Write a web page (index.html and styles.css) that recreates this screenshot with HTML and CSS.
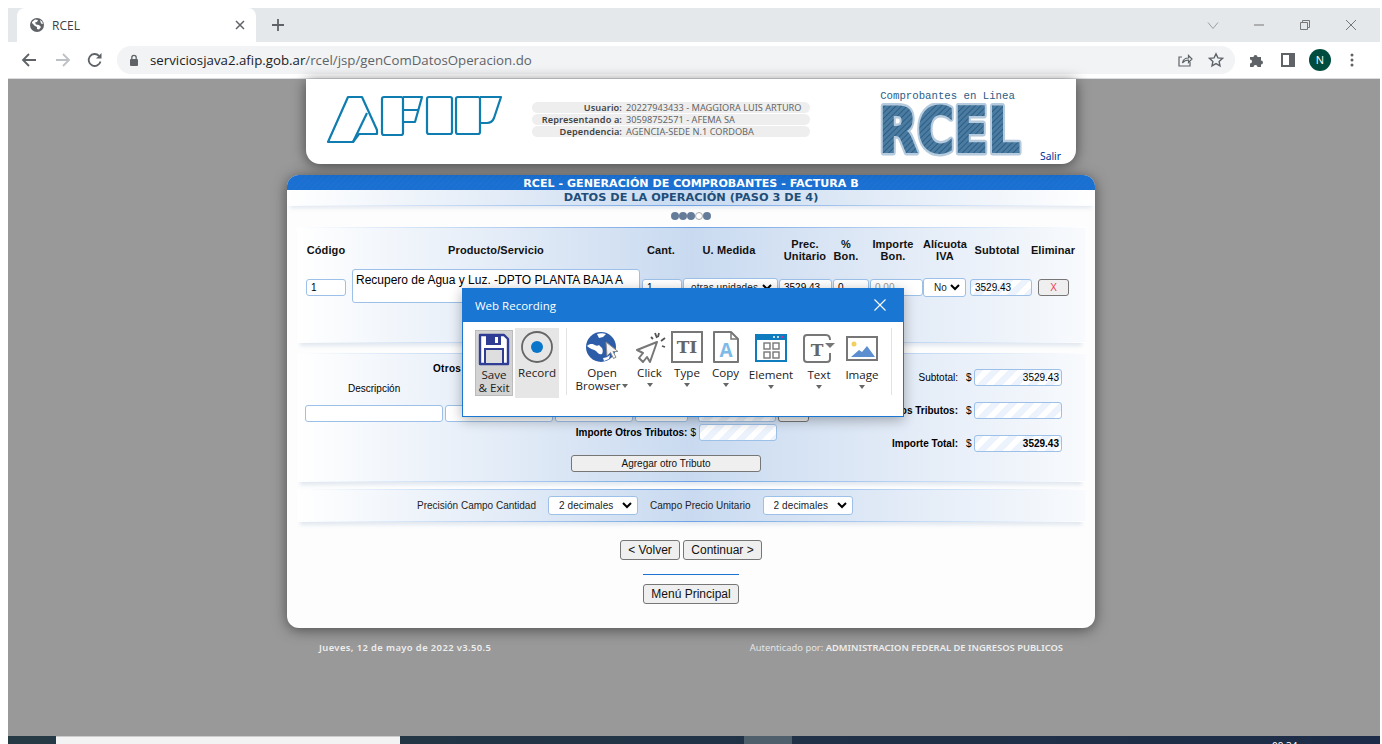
FILE: index.html
```html
<!DOCTYPE html>
<html lang="es">
<head>
  <meta charset="UTF-8">
  <title>RCEL</title>
  <link rel="stylesheet" href="styles.css">
</head>
<body>

<div class="window">
  <div class="tabstrip">
    <div class="tab">
      <svg class="tab-globe" width="16" height="16" viewBox="0 0 16 16"><circle cx="8" cy="8" r="7" fill="#5f6368"/><path d="M3 5l3-2.500 3 .5-1 2-2 .5 1 2 3 .5 2 2-2 2.500-2-.5v-2l-2-1-3-3z" fill="#fff"/><path d="M11 3l2 1.500 1 2.500-2-.5z" fill="#fff"/></svg>
      <span class="tab-title">RCEL</span>
      <svg width="10" height="10" viewBox="0 0 10 10"><path d="M1 1l8 8M9 1l-8 8" stroke="#5f6368" stroke-width="1.500"/></svg>
    </div>
    <svg class="tab-new" width="14" height="14" viewBox="0 0 14 14"><path d="M7 1v12M1 7h12" stroke="#5f6368" stroke-width="1.800"/></svg>
    <div class="win-buttons">
      <svg width="12" height="12" viewBox="0 0 12 12"><path d="M1 3.500l5 6 5-6" fill="none" stroke="#9aa0a6"/></svg>
      <svg width="12" height="12" viewBox="0 0 12 12"><path d="M1 6h10" stroke="#777"/></svg>
      <svg width="12" height="12" viewBox="0 0 12 12"><path d="M1.500 3.500h7v7h-7zM3.500 3.500v-2h7v7h-2" fill="none" stroke="#777"/></svg>
      <svg width="12" height="12" viewBox="0 0 12 12"><path d="M1 1l10 10M11 1l-10 10" stroke="#777"/></svg>
    </div>
  </div>

  <div class="toolbar">
    <svg class="nav-back" width="16" height="16" viewBox="0 0 16 16"><path d="M15 8H2M8 2L2 8l6 6" fill="none" stroke="#5f6368" stroke-width="1.800"/></svg>
    <svg class="nav-forward" width="16" height="16" viewBox="0 0 16 16"><path d="M1 8h13M8 2l6 6-6 6" fill="none" stroke="#bdc1c6" stroke-width="1.800"/></svg>
    <svg class="nav-reload" width="16" height="16" viewBox="0 0 16 16"><path d="M13.500 9.500A6 6 0 1 1 12 3.800" fill="none" stroke="#5f6368" stroke-width="1.800"/><path d="M14.500 1v5.500H9z" fill="#5f6368"/></svg>
    <div class="urlbar">
      <svg class="lock" width="10" height="12" viewBox="0 0 10 12"><rect x="1" y="5" width="8" height="7" rx="1" fill="#5f6368"/><path d="M2.800 5V3.500a2.200 2.200 0 0 1 4.400 0V5" fill="none" stroke="#5f6368" stroke-width="1.300"/></svg>
      <span class="url"><span class="url-host">serviciosjava2.afip.gob.ar</span>/rcel/jsp/genComDatosOperacion.do</span>
      <svg class="url-share" width="16" height="16" viewBox="0 0 16 16"><path d="M13 10v4H2V5h3" fill="none" stroke="#5f6368" stroke-width="1.200"/><path d="M5.500 11c.5-3.500 3-5 6-5V3.500L15 7l-3.500 3.500V8c-2.500 0-4.500 1-6 3z" fill="none" stroke="#5f6368" stroke-width="1.200"/></svg>
      <svg class="url-star" width="16" height="16" viewBox="0 0 16 16"><path d="M8 1.800l1.900 4.100 4.500.5-3.300 3 .9 4.400L8 11.600l-4 2.200.9-4.400-3.300-3 4.500-.5z" fill="none" stroke="#5f6368" stroke-width="1.400"/></svg>
    </div>
    <svg class="ext" width="16" height="16" viewBox="0 0 16 16"><path d="M1 5h3.500a2 2 0 1 1 4 0H12v3.500a2 2 0 1 1 0 4V15H8.500a2 2 0 1 0-4 0H1v-3.500a2 2 0 1 0 0-4z" fill="#5f6368"/></svg>
    <svg class="side" width="14" height="14" viewBox="0 0 14 14"><rect x="1" y="1" width="12" height="12" fill="none" stroke="#5f6368" stroke-width="2"/><rect x="8" y="1" width="5" height="12" fill="#5f6368"/></svg>
    <div class="avatar">N</div>
    <svg class="dots" width="4" height="14" viewBox="0 0 4 14"><circle cx="2" cy="2" r="1.500" fill="#5f6368"/><circle cx="2" cy="7" r="1.500" fill="#5f6368"/><circle cx="2" cy="12" r="1.500" fill="#5f6368"/></svg>
  </div>

  <div class="page">
    <div class="content">

      <div class="header-card">
        <svg class="afip-logo" width="190" height="65" viewBox="0 0 190 65">
          <g fill="none" stroke="#0f7db0" stroke-width="2.200" stroke-linejoin="round">
            <path d="M28 12H42L57 45V49H39L33 57H8Z"/>
            <path d="M33 57L47 28"/>
            <rect x="62" y="12" width="21" height="38" rx="2"/>
            <path d="M83 12H102L95 37H84M84 25H98"/>
            <rect x="107" y="12" width="25" height="37" rx="2"/>
            <rect x="136" y="12" width="24" height="37" rx="2"/>
            <path d="M160 12H181L174 33Q172 38 167 38H160"/>
          </g>
        </svg>
        <div class="user-info">
          <div class="user-row"><b>Usuario:</b><span>20227943433 - MAGGIORA LUIS ARTURO</span></div>
          <div class="user-row"><b>Representando a:</b><span>30598752571 - AFEMA SA</span></div>
          <div class="user-row"><b>Dependencia:</b><span>AGENCIA-SEDE N.1 CORDOBA</span></div>
        </div>
        <div class="rcel-logo">
          <div class="rcel-caption">Comprobantes en Linea</div>
          <svg width="156" height="54" viewBox="0 0 156 54">
            <defs>
              <pattern id="hatch" width="4" height="4" patternUnits="userSpaceOnUse" patternTransform="rotate(45)">
                <rect width="4" height="4" fill="#4a7ca3"/>
                <rect width="1" height="4" fill="#2f5c7e"/>
              </pattern>
            </defs>
            <text x="9" y="49" class="rcel-text rcel-halo" textLength="141" lengthAdjust="spacingAndGlyphs">RCEL</text>
            <text x="9" y="49" class="rcel-text" textLength="141" lengthAdjust="spacingAndGlyphs">RCEL</text>
          </svg>
        </div>
        <a class="salir">Salir</a>
      </div>

      <div class="main-card">
        <div class="title-bar">RCEL - GENERACIÓN DE COMPROBANTES - FACTURA B</div>
        <div class="subtitle-bar">DATOS DE LA OPERACIÓN (PASO 3 DE 4)</div>
        <div class="steps">
          <i class="step"></i><i class="step"></i><i class="step"></i><i class="step step-open"></i><i class="step"></i>
        </div>

        <div class="section section-items">
          <div class="item-head">
            <div>Código</div>
            <div>Producto/Servicio</div>
            <div>Cant.</div>
            <div>U. Medida</div>
            <div>Prec. Unitario</div>
            <div>% Bon.</div>
            <div>Importe Bon.</div>
            <div>Alícuota IVA</div>
            <div>Subtotal</div>
            <div>Eliminar</div>
          </div>
          <div class="item-row">
            <input class="field w-code" value="1">
            <textarea class="field w-desc">Recupero de Agua y Luz. -DPTO PLANTA BAJA A</textarea>
            <input class="field w-qty" value="1">
            <select class="pick w-unit"><option>otras unidades</option></select>
            <input class="field w-price" value="3529.43">
            <input class="field w-bon" value="0">
            <input class="field w-imp" value="0.00">
            <select class="pick w-iva"><option>No Gravado</option></select>
            <input class="field hatched w-sub" value="3529.43">
            <button class="btn btn-del">X</button>
          </div>
        </div>

        <div class="section section-taxes">
          <div class="taxes-left">
            <div class="taxes-title">Otros Tributos</div>
            <div class="taxes-head"><span>Descripción</span></div>
            <div class="taxes-row">
              <input class="field t-desc">
              <input class="field t-det">
              <input class="field t-base">
              <input class="field t-ali">
              <input class="field hatched t-imp">
              <button class="btn t-del"></button>
            </div>
            <div class="taxes-total">
              <b>Importe Otros Tributos:</b> <span>$</span>
              <input class="field hatched t-imp">
            </div>
            <button class="btn btn-add">Agregar otro Tributo</button>
          </div>
          <div class="totals">
            <span class="total-label">Subtotal:</span><span>$</span>
            <input class="field hatched amount" value="3529.43">
            <b class="total-label">Importe Otros Tributos:</b><span>$</span>
            <input class="field hatched amount">
            <b class="total-label">Importe Total:</b><span>$</span>
            <input class="field hatched amount amount-strong" value="3529.43">
          </div>
        </div>

        <div class="section section-precision">
          <span>Precisión Campo Cantidad</span>
          <select class="pick w-prec"><option>2 decimales</option></select>
          <span>Campo Precio Unitario</span>
          <select class="pick w-prec"><option>2 decimales</option></select>
        </div>

        <div class="nav-buttons">
          <button class="btn btn-nav">&lt; Volver</button>
          <button class="btn btn-nav btn-next">Continuar &gt;</button>
        </div>
        <div class="nav-line"></div>
        <button class="btn btn-nav btn-menu">Menú Principal</button>
      </div>

      <div class="footer">
        <span class="footer-date">Jueves, 12 de mayo de 2022 v3.50.5</span>
        <span class="footer-auth">Autenticado por: <b>ADMINISTRACION FEDERAL DE INGRESOS PUBLICOS</b></span>
      </div>
    </div>
  </div>

  <div class="taskbar">
    <div class="task-white"></div>
    <div class="task-active"></div>
    <div class="task-time">09:34</div>
  </div>
</div>

<div class="recorder">
  <div class="recorder-head">
    <span>Web Recording</span>
    <svg width="12" height="12" viewBox="0 0 12 12"><path d="M.5.500l11 11M11.500.500l-11 11" stroke="#fff" stroke-width="1.100"/></svg>
  </div>
  <div class="recorder-tools">
    <div class="tool-save">
      <svg width="32" height="33" viewBox="0 0 32 33">
        <path d="M2 2h24l4 4v25H2z" fill="#fff" stroke="#2f3d94" stroke-width="2.400" stroke-linejoin="round"/>
        <rect x="8" y="2" width="15" height="10" fill="#2f3d94"/>
        <rect x="17" y="4" width="3" height="6" fill="#fff"/>
        <rect x="7" y="16" width="18" height="15" fill="#dedede" stroke="#2f3d94" stroke-width="2"/>
      </svg>
      <div class="tool-label">Save<br>&amp; Exit</div>
    </div>
    <div class="tool-record">
      <svg width="32" height="32" viewBox="0 0 32 32"><circle cx="16" cy="16" r="15" fill="none" stroke="#666" stroke-width="1.800"/><circle cx="16" cy="16" r="6" fill="#0a76c9"/></svg>
      <div class="tool-label">Record</div>
    </div>
    <div class="tool-sep"></div>
    <div class="tool w-open">
      <svg width="34" height="32" viewBox="0 0 34 32">
        <circle cx="16" cy="16" r="15" fill="#2d5da8"/>
        <path d="M2 15c3-3 6-2 8-1 1 1 3 1 4 0l3 3c1 2 1 4 0 6-3 1-4-1-6-3-3-2-6-2-9-5zM12 3c3-1 6-1 9 0l-3 3-4 1zM18 27c2 0 5-1 7-3l-1 4-5 2z" fill="#fff"/>
        <path d="M21 11l1 14 3.500-3.500 3 6 2.500-1.200-3-5.800h5z" fill="#f4f4f4" stroke="#8a8a8a"/>
      </svg>
      <div class="tool-label">Open<br>Browser<i class="caret caret-side"></i></div>
    </div>
    <div class="tool w-click">
      <svg width="32" height="32" viewBox="0 0 32 32">
        <path d="M23 11L3 19l6 3-4 5 4 4 4-5 3 5z" fill="#fff" stroke="#777" stroke-width="2" stroke-linejoin="round"/>
        <path d="M23 7l-2-5M27 10l4-3M28 15l3 1M19 8l-2-2M25 2l-1 4" stroke="#555" stroke-width="1.800"/>
      </svg>
      <div class="tool-label">Click</div>
      <i class="caret"></i>
    </div>
    <div class="tool w-type">
      <svg width="32" height="32" viewBox="0 0 32 32">
        <rect x="1" y="1" width="30" height="30" fill="#fff" stroke="#777" stroke-width="2"/>
        <text x="16" y="22" class="icon-letters">TI</text>
      </svg>
      <div class="tool-label">Type</div>
      <i class="caret"></i>
    </div>
    <div class="tool w-copy">
      <svg width="26" height="32" viewBox="0 0 26 32">
        <path d="M1 1h17l7 7v23H1z" fill="#fff" stroke="#777" stroke-width="2" stroke-linejoin="round"/>
        <path d="M18 1v7h7" fill="none" stroke="#777" stroke-width="1.500"/>
        <text x="13" y="26" class="icon-letter-a">A</text>
      </svg>
      <div class="tool-label">Copy</div>
      <i class="caret"></i>
    </div>
    <div class="tool tool-low w-element">
      <svg width="32" height="28" viewBox="0 0 32 28">
        <rect x="1" y="1" width="30" height="26" fill="#fff" stroke="#0f7cc0" stroke-width="2"/>
        <rect x="0" y="0" width="32" height="6" fill="#0f7cc0"/>
        <circle cx="19" cy="3" r="1" fill="#fff"/><circle cx="23" cy="3" r="1" fill="#fff"/><circle cx="27" cy="3" r="1" fill="#f28"/>
        <g fill="none" stroke="#777" stroke-width="1.400"><rect x="9" y="9" width="6" height="6"/><rect x="18" y="9" width="6" height="6"/><rect x="9" y="18" width="6" height="6"/><rect x="18" y="18" width="6" height="6"/></g>
      </svg>
      <div class="tool-label">Element</div>
      <i class="caret"></i>
    </div>
    <div class="tool tool-low w-text">
      <svg width="32" height="29" viewBox="0 0 32 29">
        <path d="M23 1H4Q1 1 1 4v21q0 3 3 3h20q3 0 3-3v-6" fill="none" stroke="#777" stroke-width="2"/>
        <path d="M23 1q4 0 4 5" fill="none" stroke="#777" stroke-width="2"/>
        <path d="M22 9h10l-5 5z" fill="#777"/>
        <text x="14" y="22" class="icon-letters">T</text>
      </svg>
      <div class="tool-label">Text</div>
      <i class="caret"></i>
    </div>
    <div class="tool tool-low w-image">
      <svg width="32" height="26" viewBox="0 0 32 26">
        <rect x="1" y="1" width="30" height="23" fill="#fff" stroke="#777" stroke-width="2"/>
        <circle cx="8" cy="8" r="2.500" fill="#f0d060"/>
        <path d="M5 21l8-7 3 2 5-6 8 11z" fill="#5b8fd0"/>
      </svg>
      <div class="tool-label">Image</div>
      <i class="caret"></i>
    </div>
    <div class="tool-sep tool-sep-end"></div>
  </div>
</div>

</body>
</html>
```

FILE: styles.css
```css
* {
  box-sizing: border-box;
}
html, body {
  margin: 0;
  height: 744px;
  overflow: hidden;
  background: #fff;
}
body {
  font-family: "Liberation Sans", Arial, sans-serif;
  font-size: 10px;
  color: #000;
}
svg {
  display: block;
  flex: none;
}

/* browser */
.window {
  margin: 8px 2px 0 8px;
  height: 736px;
  display: flex;
  flex-direction: column;
}
.tabstrip {
  height: 34px;
  background: #e5e8eb;
  display: flex;
  align-items: center;
  padding-left: 9px;
}
.tab {
  width: 239px;
  height: 34px;
  background: #fff;
  border-radius: 8px 8px 0 0;
  display: flex;
  align-items: center;
  padding: 0 11px 0 12px;
}
.tab-title {
  font-family: "Open Sans", sans-serif;
  font-size: 12px;
  color: #3c4043;
  margin-left: 7px;
  flex: 1;
}
.tab-new {
  margin-left: 15px;
}
.win-buttons {
  margin-left: auto;
  display: flex;
  gap: 34px;
  padding-right: 23px;
}
.toolbar {
  height: 37px;
  padding-bottom: 1px;
  border-bottom: 1px solid #dadce0;
  display: flex;
  align-items: center;
  background: #fff;
}
.nav-back {
  margin-left: 13px;
}
.nav-forward {
  margin-left: 18px;
}
.nav-reload {
  margin-left: 16px;
}
.urlbar {
  margin-left: 14px;
  width: 1118px;
  height: 28px;
  border-radius: 14px;
  background: #f1f3f4;
  display: flex;
  align-items: center;
  padding-left: 12px;
}
.url {
  font-family: "Open Sans", sans-serif;
  font-size: 13.270px;
  color: #5f6368;
  margin-left: 11px;
  flex: 1;
  white-space: nowrap;
}
.url-host {
  color: #202124;
}
.url-share {
  margin-right: 15px;
}
.url-star {
  margin-right: 11px;
}
.ext {
  margin-left: 14px;
}
.side {
  margin-left: 16px;
}
.avatar {
  margin-left: 14px;
  width: 22px;
  height: 22px;
  border-radius: 50%;
  background: #004d40;
  color: #fff;
  font-family: "Open Sans", sans-serif;
  font-size: 11px;
  display: flex;
  align-items: center;
  justify-content: center;
}
.dots {
  margin-left: 19px;
}

/* afip page */
.page {
  flex: 1;
  background: #999;
  min-height: 0;
}
.content {
  width: 808px;
  margin-left: 279px;
}
.header-card {
  width: 770px;
  height: 85px;
  margin: 0 19px;
  background: #fff;
  border-radius: 0 0 14px 14px;
  box-shadow: 0 2px 14px rgba(0, 0, 0, .55);
  display: flex;
  position: relative;
}
.afip-logo {
  margin: 6px 0 0 14px;
}
.user-info {
  margin: 23px 0 0 22px;
  width: 278px;
  display: flex;
  flex-direction: column;
  gap: 1px;
}
.user-row {
  height: 11px;
  background: #eee;
  border-radius: 6px;
  display: grid;
  grid-template-columns: 90px 1fr;
  column-gap: 4px;
  font-family: "Noto Sans", sans-serif;
  font-size: 9.200px;
  line-height: 11px;
  color: #666;
  white-space: nowrap;
}
.user-row b {
  text-align: right;
  color: #444;
  font-weight: 600;
  letter-spacing: .1px;
}
.rcel-logo {
  margin: 11px 0 0 60px;
  width: 150px;
}
.rcel-caption {
  font-family: "Liberation Mono", monospace;
  font-size: 10.700px;
  line-height: 13px;
  color: #2d5e86;
  text-align: center;
  padding-left: 5px;
}
.rcel-text {
  font-family: "DejaVu Sans", sans-serif;
  font-weight: bold;
  font-size: 62px;
  fill: url(#hatch);
  stroke: url(#hatch);
  stroke-width: 2px;
}
.rcel-halo {
  fill: #b5cbdd;
  stroke: #b5cbdd;
  stroke-width: 7px;
  stroke-linejoin: round;
}
.salir {
  position: absolute;
  left: 734px;
  top: 70px;
  font-family: "Noto Sans", sans-serif;
  font-size: 10.300px;
  color: #003399;
}

.main-card {
  margin-top: 11px;
  height: 453px;
  background: #fdfdfd;
  border-radius: 12px;
  box-shadow: 0 2px 14px rgba(0, 0, 0, .5);
  display: flex;
  flex-direction: column;
  align-items: center;
  overflow: hidden;
}
.title-bar {
  width: 100%;
  height: 15px;
  background: repeating-linear-gradient(135deg, #1a6fd0 0 2px, #1c72d3 2px 4px);
  color: #fff;
  font-family: "DejaVu Sans", sans-serif;
  font-weight: bold;
  font-size: 11.100px;
  line-height: 17px;
  text-align: center;
}
.subtitle-bar {
  width: 100%;
  height: 16px;
  flex: none;
  background: linear-gradient(90deg, #fff, #c9daf0 50%, #fff);
  border-bottom: 1px solid #8fb8e8;
  border-image: linear-gradient(90deg, #fff, #6ea3e4 50%, #fff) 1;
  box-shadow: 0 5px 4px -3px rgba(120, 150, 190, .2);
  color: #1f4e79;
  font-family: "DejaVu Sans", sans-serif;
  font-weight: bold;
  font-size: 11.300px;
  line-height: 15px;
  text-align: center;
}
.steps {
  height: 21px;
  padding-bottom: 2px;
  display: flex;
  align-items: center;
  gap: 0;
}
.step {
  width: 8px;
  height: 8px;
  border-radius: 50%;
  background: #667d99;
}
.step-open {
  background: #fff;
  border: 1px solid #aaa;
}
.section {
  width: 788px;
  flex: none;
  background: linear-gradient(90deg, #fff, #c9daf0 50%, #f8fafd);
  border-top: 1px solid #8fb8e8;
  border-bottom: 1px solid #8fb8e8;
  border-image: linear-gradient(90deg, #fff, #6ea3e4 50%, #fff) 1;
  box-shadow: 0 6px 4px -3px rgba(120, 150, 190, .2);
}
.section-items {
  height: 116px;
  padding: 10px 0 0 9px;
}
.item-head {
  display: grid;
  grid-template-columns: 40px 300px 30px 106px 46px 36px 58px 46px 58px 54px;
  height: 24px;
  align-items: center;
  text-align: center;
  font-size: 11px;
  font-weight: bold;
  line-height: 12px;
  letter-spacing: .1px;
  color: #111;
  white-space: nowrap;
}
.item-head div:nth-child(5),
.item-head div:nth-child(6),
.item-head div:nth-child(7),
.item-head div:nth-child(8) {
  white-space: normal;
}
.item-row {
  margin-top: 7px;
  display: flex;
  align-items: center;
  height: 34px;
}
.item-row > * {
  margin-top: 2px;
}
.field {
  height: 17px;
  border: 1px solid #9cc0e7;
  border-radius: 3px;
  background: #fff;
  padding: 1px 4px;
  font-family: "Liberation Sans", Arial, sans-serif;
  font-size: 10px;
  color: #000;
  outline: none;
}
.pick {
  appearance: none;
  height: 19px;
  border: 1px solid #9cc0e7;
  border-radius: 3px;
  background: #fff url("data:image/svg+xml,%3Csvg xmlns='http://www.w3.org/2000/svg' width='10' height='7'%3E%3Cpath d='M1 1l4 4 4-4' fill='none' stroke='%23000' stroke-width='2'/%3E%3C/svg%3E") no-repeat right 5px center;
  font-family: "Liberation Sans", Arial, sans-serif;
  font-size: 10px;
  letter-spacing: .1px;
  color: #222;
  padding: 0 18px 0 10px;
}
.hatched {
  background: repeating-linear-gradient(135deg, #edf3fc 0 6px, #fff 6px 12px);
}
.w-code {
  width: 40px;
}
.item-row .w-desc {
  width: 288px;
  height: 34px;
  margin: 0 0 0 6px;
  padding: 3px 3px;
  font-size: 12px;
  resize: none;
  overflow: hidden;
}
.w-qty {
  width: 40px;
  margin-left: 2px;
}
.w-unit {
  width: 95px;
  margin-left: 1px;
  padding-left: 7px;
}
.w-price {
  width: 53px;
  margin-left: 1px;
}
.w-bon {
  width: 36px;
  margin-left: 1px;
}
.w-imp {
  width: 53px;
  margin-left: 1px;
  color: #999;
}
.w-iva {
  width: 43px;
}
.w-sub {
  width: 62px;
  margin-left: 4px;
}
.btn {
  border: 1px solid #767676;
  border-radius: 3px;
  background: #efefef;
  font-family: "Liberation Sans", Arial, sans-serif;
  color: #111;
  padding: 0;
}
.btn-del {
  width: 31px;
  height: 17px;
  margin-left: 6px;
  color: #f0405a;
  font-size: 10px;
}

.section-taxes {
  margin-top: 10px;
  height: 129px;
  display: flex;
  padding-left: 8px;
}
.taxes-left {
  width: 505px;
  flex: none;
}
.taxes-title {
  margin-top: 8px;
  padding-left: 128px;
  font-size: 10px;
  font-weight: bold;
  line-height: 13px;
  letter-spacing: .3px;
}
.taxes-head {
  margin-top: 7px;
  height: 13px;
  line-height: 13px;
  padding-left: 43px;
}
.taxes-row {
  margin-top: 10px;
  display: flex;
}
.t-desc {
  width: 138px;
}
.t-det {
  width: 108px;
  margin-left: 2px;
}
.t-base {
  width: 78px;
  margin-left: 2px;
}
.t-ali {
  width: 53px;
  margin-left: 2px;
}
.t-imp {
  width: 78px;
  margin-left: 10px;
}
.t-del {
  width: 31px;
  height: 17px;
  margin-left: 2px;
}
.taxes-total {
  margin-top: 2px;
  display: flex;
  justify-content: flex-end;
  align-items: center;
  gap: 3px;
  padding-right: 33px;
}
.taxes-total .t-imp {
  margin-left: 0;
}
.btn-add {
  display: block;
  width: 190px;
  height: 17px;
  margin: 14px 0 0 266px;
  font-size: 10px;
}
.totals {
  margin: 15px 0 0 0;
  width: 252px;
  display: grid;
  grid-template-columns: 1fr 8px 88px;
  row-gap: 16px;
  column-gap: 0;
  align-items: center;
  height: 83px;
}
.total-label {
  text-align: right;
  padding-right: 8px;
  white-space: nowrap;
}
.amount {
  width: 88px;
  text-align: right;
  padding-right: 2px;
}
.amount-strong {
  font-weight: bold;
}
.section-precision {
  margin-top: 7px;
  height: 33px;
  display: flex;
  align-items: center;
  padding-left: 120px;
  color: #222;
}
.w-prec {
  width: 90px;
  margin: 0 12px;
}
.nav-buttons {
  margin-top: 18px;
  display: flex;
  gap: 3px;
}
.btn-nav {
  height: 20px;
  font-size: 12px;
  width: 60px;
}
.btn-next {
  width: 79px;
}
.nav-line {
  margin-top: 14px;
  width: 96px;
  height: 1px;
  background: #1a73d0;
}
.btn-menu {
  margin-top: 9px;
  width: 96px;
}
.footer {
  margin-top: 13px;
  padding: 0 32px;
  display: flex;
  justify-content: space-between;
  font-family: "Noto Sans", sans-serif;
  font-size: 9.400px;
  line-height: 13px;
  font-weight: 600;
  color: #eee;
}
.footer-date {
  letter-spacing: .4px;
}
.footer-auth {
  color: #e4e4e4;
  font-weight: 400;
}
.footer-auth b {
  font-weight: 600;
  color: #eee;
}

.taskbar {
  height: 8px;
  overflow: hidden;
  flex: none;
  background: linear-gradient(90deg, #253a45, #1d2c48);
  display: flex;
}
.task-white {
  width: 344px;
  margin-left: 48px;
  background: #f3f3f3;
  border-top: 1px solid #ccc;
}
.task-active {
  width: 48px;
  margin-left: 344px;
  background: #4f5f6b;
}
.task-time {
  margin-left: 480px;
  color: #fff;
  font-family: "Noto Sans", sans-serif;
  font-size: 10px;
  line-height: 12px;
  padding-top: 4px;
}

/* recorder dialog */
.recorder {
  position: absolute;
  left: 462px;
  top: 288px;
  width: 442px;
  height: 129px;
  background: #fff;
  border: 1px solid #1976d2;
  box-shadow: 0 3px 12px rgba(0, 0, 0, .3);
  font-family: "Open Sans", sans-serif;
  color: #222;
}
.recorder-head {
  height: 34px;
  margin: -1px -1px 0;
  padding: 0 18px 0 13px;
  background: #1976d2;
  color: #fff;
  font-size: 11.500px;
  display: flex;
  align-items: center;
  justify-content: space-between;
}
.recorder-tools {
  display: flex;
  padding: 6px 0 0 12px;
  align-items: flex-start;
}
.tool-label {
  font-size: 11.600px;
  line-height: 13px;
  text-align: center;
  white-space: nowrap;
}
.tool-save {
  width: 38px;
  height: 66px;
  margin-top: 2px;
  background: #d3d3d3;
  border: 1px solid #bbb;
  padding-top: 2px;
  display: flex;
  flex-direction: column;
  align-items: center;
}
.tool-save .tool-label {
  margin-top: 2px;
}
.tool-record {
  width: 44px;
  height: 70px;
  margin-left: 2px;
  background: #e6e6e6;
  padding-top: 3px;
  display: flex;
  flex-direction: column;
  align-items: center;
}
.tool-record .tool-label {
  margin-top: 3px;
}
.tool-sep {
  width: 1px;
  height: 67px;
  background: #e3e3e3;
  margin: 0 3px 0 7px;
}
.tool-sep-end {
  margin: 0 0 0 6px;
}
.tool {
  padding-top: 3px;
  display: flex;
  flex-direction: column;
  align-items: center;
  height: 70px;
  flex: none;
}
.tool .tool-label {
  margin-top: 3px;
}
.tool-low svg {
  margin-top: 3px;
}
.tool-low .tool-label {
  margin-top: 6px;
}
.w-text .tool-label {
  margin-top: 5px;
}
.w-image svg {
  margin-top: 5px;
}
.caret {
  display: block;
  width: 0;
  height: 0;
  margin-top: 4px;
  border: 3.500px solid transparent;
  border-top: 4px solid #666;
  border-bottom: 0;
}
.caret-side {
  display: inline-block;
  margin: 0 0 2px 2px;
}
.w-open { width: 63px; padding-left: 1px; }
.w-click { width: 33px; }
.w-type { width: 42px; }
.w-copy { width: 35px; }
.w-element { width: 56px; }
.w-text { width: 40px; }
.w-image { width: 46px; }
.icon-letters {
  font-family: "DejaVu Serif", serif;
  font-weight: bold;
  font-size: 17px;
  fill: #666;
  text-anchor: middle;
}
.icon-letter-a {
  font-family: "Open Sans", sans-serif;
  font-weight: bold;
  font-size: 19px;
  fill: #7dbbe8;
  text-anchor: middle;
}
```
